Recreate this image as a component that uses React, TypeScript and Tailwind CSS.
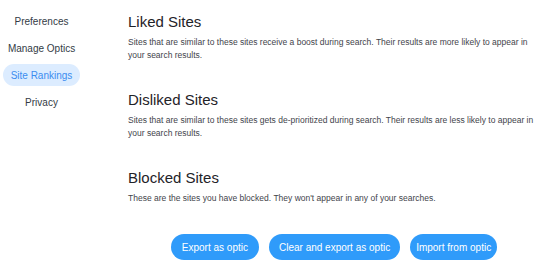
import React from "react";

const NAV = ["Preferences", "Manage Optics", "Site Rankings", "Privacy"];
const ACTIVE = "Site Rankings";

const SECTIONS = [
  {
    title: "Liked Sites",
    text: "Sites that are similar to these sites receive a boost during search. Their results are more likely to appear in your search results.",
  },
  {
    title: "Disliked Sites",
    text: "Sites that are similar to these sites gets de-prioritized during search. Their results are less likely to appear in your search results.",
  },
  {
    title: "Blocked Sites",
    text: "These are the sites you have blocked. They won't appear in any of your searches.",
  },
];

export default function App() {
  return (
    <div
      className="flex w-[550px] h-[277px] bg-white overflow-hidden"
      style={{ fontFamily: '"Liberation Sans", Arial, sans-serif' }}
    >
      {/* Sidebar */}
      <div className="w-[83px] flex-shrink-0 flex flex-col items-center pt-[10px] gap-[5px]">
        {NAV.map((item) => (
          <div
            key={item}
            className={`h-[22px] px-2 rounded-full flex items-center text-[10px] whitespace-nowrap ${
              item === ACTIVE ? "bg-[#dcecff] text-[#3b8cf0]" : "text-[#333b45]"
            }`}
          >
            {item}
          </div>
        ))}
      </div>

      {/* Main */}
      <div className="flex-1 min-w-0 pl-[45px] pr-[10px] pt-[13px] flex flex-col gap-[29px]">
        {SECTIONS.map((s) => (
          <div key={s.title} className="flex flex-col gap-[5px]">
            <h2 className="text-[15px] leading-[18px] text-[#1f2328]">{s.title}</h2>
            <p className="text-[8.5px] leading-[13px] text-[#3f444b]">{s.text}</p>
          </div>
        ))}
        <div className="flex justify-center gap-[10px]">
          <button className="h-[26px] px-[11px] rounded-full bg-[#2f9bfa] text-white text-[10px] whitespace-nowrap">
            Export as optic
          </button>
          <button className="h-[26px] px-[10px] rounded-full bg-[#2f9bfa] text-white text-[10px] whitespace-nowrap">
            Clear and export as optic
          </button>
          <button className="h-[26px] px-[6px] rounded-full bg-[#2f9bfa] text-white text-[10px] whitespace-nowrap">
            Import from optic
          </button>
        </div>
      </div>
    </div>
  );
}
